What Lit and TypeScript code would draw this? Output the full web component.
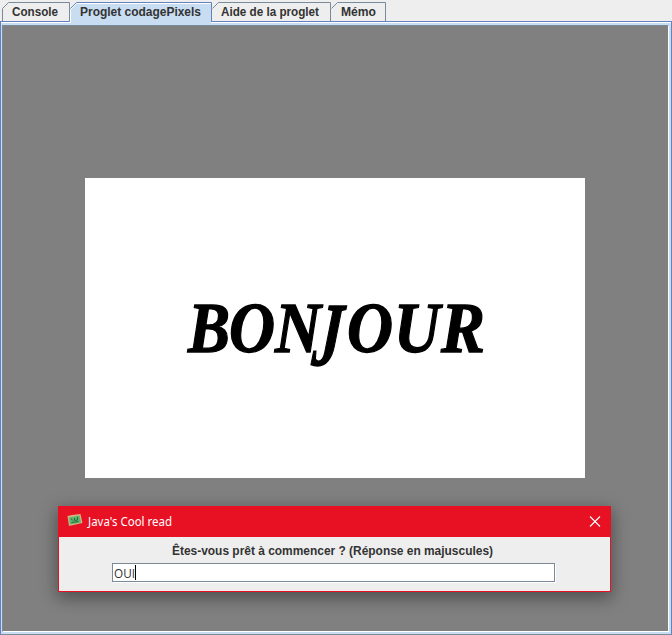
import { LitElement, html, svg, css } from "lit";
import { customElement, state } from "lit/decorators.js";

interface Tab { label: string; width: number; pad: number; textWidth: number }
const TABS: Tab[] = [
  { label: "Console", width: 68, pad: 10, textWidth: 46 },
  { label: "Proglet codagePixels", width: 142, pad: 10, textWidth: 121 },
  { label: "Aide de la proglet", width: 119, pad: 9, textWidth: 98 },
  { label: "Mémo", width: 55, pad: 10, textWidth: 35 },
];

// Glyph, left edge, baseline, advance width, vertical stretch, extra slant
const LETTERS: [string, number, number, number, number, number][] = [
  ["B", 103, 174, 42, 1, 0], ["O", 144, 174, 46, 1, 0], ["N", 190, 174, 46, 1, 0], ["J", 226, 187, 29, 1.25, -5],
  ["O", 262, 174, 46, 1, 0], ["U", 309, 174, 46, 1, 0], ["R", 356, 174, 44, 1, 0],
];

@customElement("app-root")
export class AppRoot extends LitElement {
  @state() private active = 1;

  static styles = css`
    :host { display: flex; flex-direction: column; width: 672px; height: 635px; box-sizing: border-box;
      background: #eee; font-family: "Liberation Sans", Arial, sans-serif; color: #333; overflow: hidden; }
    .tabs { display: flex; height: 20px; padding: 2px 0 0 2px; flex: none; z-index: 1; }
    .tab { display: block; height: 20px; flex: none; overflow: visible; }
    .tab text { font-weight: bold; font-size: 12px; fill: #333; }
    .frame { flex: 1; display: flex; box-sizing: border-box; margin-top: -1px; box-shadow: inset 0 1px #fff;
      border: 1px solid #6382bf; border-bottom-color: #7a8a99; background: #c8ddf2; }
    .panel { flex: 1; box-sizing: border-box; display: flex; flex-direction: column; align-items: center;
      margin: 3px 2px 2px 1px; padding-right: 1px;
      border: 1px solid #7a8a99; border-right-color: #fff; border-bottom-color: #fff; background: #808080; }
    .canvas { width: 500px; height: 300px; margin-top: 152px; background: #fff; flex: none; }
    .canvas svg { display: block; }
    .canvas text { font: italic bold 72px "Liberation Serif", "Times New Roman", serif; fill: #000; stroke: #000; stroke-width: 1.3px; }
    .dialog { width: 553px; height: 86px; box-sizing: border-box; border: 1px solid #e81123; background: #eee;
      margin: 28px 1px 0 0; flex: none; display: flex; flex-direction: column; align-items: center;
      box-shadow: 0 5px 16px 1px rgba(0,0,0,.4); }
    .title { align-self: stretch; height: 30px; background: #e81123; display: flex; align-items: center; flex: none; }
    .title svg { display: block; overflow: visible; }
    .title text { font: 12px "Noto Sans", sans-serif; fill: #fff; }
    .question { height: 26px; flex: none; }
    .question text { font-weight: bold; font-size: 12px; fill: #333; }
    .field { width: 443px; height: 19px; box-sizing: border-box; border: 1px solid #7a8a99; background: #fff;
      margin-right: 2px; box-shadow: 1px 1px #fff; display: flex; align-items: center; }
    .field text { font: 12px "Open Sans", sans-serif; fill: #333; }
  `;

  private renderTab(tab: Tab, i: number) {
    const on = i === this.active;
    const w = tab.width;
    const edge = i === 0 ? "M.5 19.5V6.5" : "M.5 6.5";
    return html`<svg class="tab" width=${w} height="20" @click=${() => (this.active = i)}>
      <path d="M0 19V6.5L6.5 0H${w}V19Z" fill=${on ? "#c8ddf2" : "#eee"} />
      <path d="${edge}L6.5 .5H${w - 0.5}V19.5" fill="none" stroke=${on ? "#6382bf" : "#7a8a99"} />
      ${on ? svg`<path d="M1 19h${w - 2}v3h-${w - 2}z" fill="#c8ddf2"/><path d="M.5 20.5V7.5L6.5 1.5H${w - 1}" fill="none" stroke="#fff"/>` : null}
      <text x=${tab.pad} y="14" textLength=${tab.textWidth} lengthAdjust="spacingAndGlyphs">${tab.label}</text>
    </svg>`;
  }

  render() {
    return html`
      <div class="tabs">${TABS.map((t, i) => this.renderTab(t, i))}</div>
      <div class="frame"><div class="panel">
        <div class="canvas"><svg width="500" height="300">
          ${LETTERS.map(([c, x, y, w, s, k]) => svg`<text transform="translate(${x} ${y}) skewX(${k}) scale(1 ${s})" textLength=${w} lengthAdjust="spacingAndGlyphs">${c}</text>`)}
        </svg></div>
        <div class="dialog">
          <div class="title"><svg width="551" height="30">
            <path d="M8.5 9L13 8L21.5 7L23.5 16L10 19Z" fill="#d3b184"/>
            <path d="M10 10.5L20.5 8.5L22 15.5L11 17.5Z" fill="#5db56a"/>
            <path d="M12 11.5l1.5 2M15.5 11v2.5l3-.5V10M12.5 15.5l7-1" fill="none" stroke="#286842"/>
            <text x="29" y="19" textLength="84" lengthAdjust="spacingAndGlyphs">Java's Cool read</text>
            <path d="M531 9.5L541 19.5M541 9.5L531 19.5" stroke="#fff" stroke-width="1.1"/>
          </svg></div>
          <svg class="question" width="551" height="26"><text x="113" y="18" textLength="321" lengthAdjust="spacingAndGlyphs">Êtes-vous prêt à commencer ? (Réponse en majuscules)</text></svg>
          <div class="field"><svg width="100" height="17">
            <text x="1" y="14" textLength="21" lengthAdjust="spacingAndGlyphs">OUI</text>
            <path d="M22.5 1V16" stroke="#000"/>
          </svg></div>
        </div>
      </div></div>`;
  }
}
